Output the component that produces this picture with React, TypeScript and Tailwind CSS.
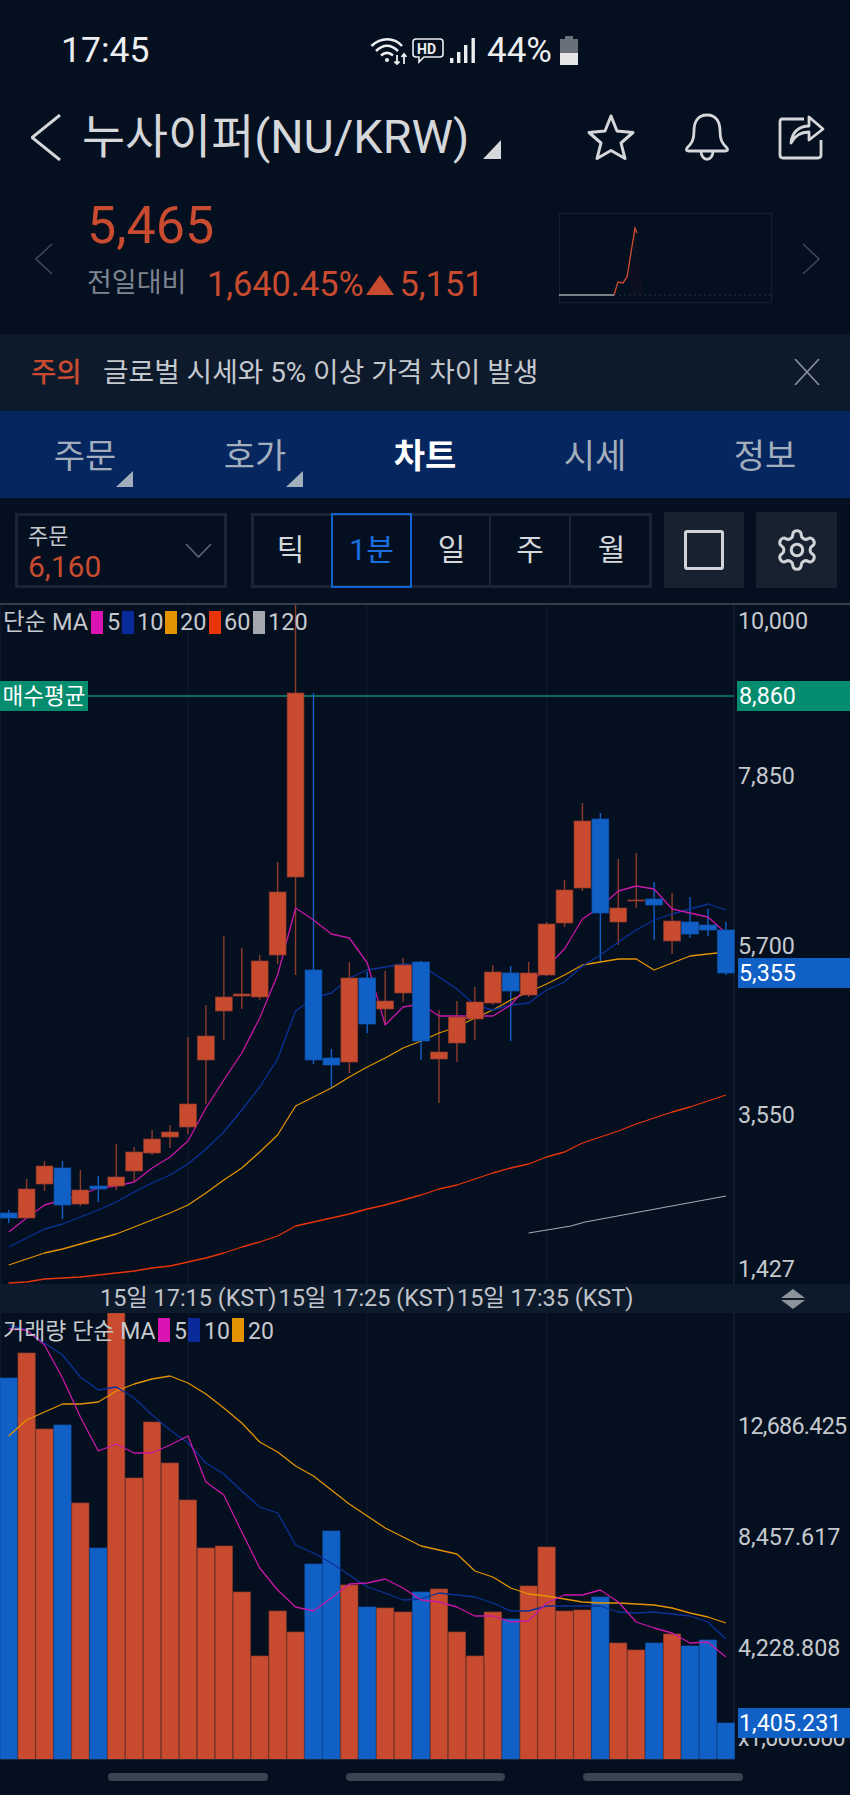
import React from "react";

const RED = "#c84b2f";
const RED_DARK = "#8f3c2b";
const BLUE = "#1160c6";
const X = (i: number) => 8.67 + 17.93 * i;

// [bodyTop, bodyBottom, wickTop, wickBottom, isBlue]
const candles: [number, number, number, number, number][] = [
  [1213, 1218, 1210, 1223, 1], [1189, 1218, 1179, 1218, 0], [1166, 1184, 1161, 1191, 0], [1168, 1205, 1161, 1219, 1],
  [1190, 1204, 1170, 1206, 0], [1186, 1189, 1176, 1202, 1], [1177, 1186, 1144, 1190, 0], [1152, 1171, 1147, 1181, 0],
  [1139, 1153, 1130, 1155, 0], [1132, 1137, 1125, 1148, 0], [1104, 1127, 1037, 1134, 0], [1036, 1060, 1005, 1104, 0],
  [997, 1011, 936, 1040, 0], [994, 996, 948, 1009, 0], [961, 997, 955, 1000, 0], [892, 955, 862, 964, 0],
  [693, 877, 604, 975, 0], [970, 1060, 693, 1064, 1], [1058, 1065, 1049, 1088, 1], [978, 1062, 962, 1073, 0],
  [978, 1024, 972, 1033, 1], [1001, 1009, 971, 1025, 0], [965, 993, 958, 1002, 0], [962, 1041, 961, 1060, 1],
  [1052, 1059, 1010, 1103, 0], [1017, 1043, 1001, 1062, 0], [1002, 1019, 987, 1040, 0], [972, 1003, 965, 1005, 0],
  [973, 991, 966, 1041, 1], [973, 995, 962, 997, 0], [924, 975, 922, 976, 0], [890, 923, 880, 927, 0],
  [821, 888, 803, 891, 0], [819, 913, 813, 962, 1], [908, 922, 859, 945, 0], [900, 901, 853, 908, 0],
  [899, 905, 882, 940, 1], [921, 941, 893, 954, 0], [922, 934, 897, 938, 1], [925, 930, 909, 936, 1],
  [930, 973, 922, 975, 1],
];

const ma5 = [1232,1218,1205,1200,1195,1188,1186,1182,1168,1157,1141,1108,1080,1053,1018,975,908,920,934,938,963,1025,1007,1004,1016,1016,1016,1016,1005,985,967,949,919,907,891,886,889,909,913,917,933];
const ma10 = [1247,1238,1229,1224,1217,1210,1202,1192,1183,1175,1164,1149,1132,1110,1087,1059,1011,998,993,978,970,967,964,965,977,989,1005,1010,1005,1003,990,982,966,955,942,930,920,914,909,904,910];
const ma20 = [1265,1259,1253,1249,1244,1239,1234,1227,1220,1213,1205,1193,1180,1168,1152,1135,1106,1097,1088,1077,1067,1058,1048,1041,1033,1027,1018,1010,1000,992,984,975,965,962,959,959,970,963,956,954,952];
const ma60 = [1283,1282,1279,1278,1277,1275,1273,1271,1268,1266,1262,1258,1253,1247,1242,1236,1226,1222,1218,1214,1209,1205,1200,1195,1189,1185,1179,1173,1168,1164,1157,1152,1143,1137,1131,1124,1118,1112,1107,1101,1095];

const volTop = [1378,1353,1429,1425,1503,1548,1313,1478,1422,1463,1500,1548,1546,1592,1656,1611,1632,1564,1531,1585,1607,1608,1612,1592,1589,1632,1656,1612,1619,1586,1547,1611,1610,1597,1643,1650,1643,1634,1646,1640,1723];
const volBlue = [0,3,5,17,18,20,23,28,33,36,38,39,40];

const vma5 = [1329,1330,1345,1378,1417,1451,1444,1453,1453,1445,1436,1482,1495,1532,1568,1590,1607,1611,1598,1584,1583,1579,1588,1600,1602,1607,1616,1616,1622,1621,1603,1595,1595,1590,1602,1622,1628,1633,1643,1642,1657];
const vma10 = [1325,1330,1343,1355,1377,1390,1387,1398,1415,1430,1443,1463,1474,1491,1507,1513,1545,1553,1563,1575,1587,1593,1600,1599,1593,1595,1597,1603,1611,1611,1606,1606,1606,1606,1612,1613,1612,1614,1616,1622,1639];
const vma20 = [1436,1420,1412,1404,1404,1402,1391,1384,1379,1376,1383,1394,1408,1423,1442,1452,1466,1476,1490,1504,1516,1528,1537,1546,1550,1554,1571,1577,1588,1594,1596,1599,1602,1603,1603,1604,1605,1608,1613,1617,1623];

const pts = (a: number[]) => a.map((y, i) => `${X(i).toFixed(1)},${y}`).join(" ");

function Line({ data, color }: { data: number[]; color: string }) {
  return <polyline points={pts(data)} fill="none" stroke={color} strokeWidth={1.3} strokeLinejoin="round" />;
}

function Grid({ top, bottom }: { top: number; bottom: number }) {
  return (
    <>
      {[0.7, 188, 367, 546.7].map((x) => (
        <line key={x} x1={x} x2={x} y1={top} y2={bottom} stroke="#101c2c" strokeWidth={1} />
      ))}
      <line x1={734} x2={734} y1={top} y2={bottom} stroke="#1b2636" strokeWidth={1.2} />
    </>
  );
}

function PriceChart() {
  return (
    <svg className="block w-[850px] h-[679px]" viewBox="0 605 850 679">
      <Grid top={605} bottom={1284} />
      <line x1={88} x2={734} y1={696} y2={696} stroke="#0b6a5c" strokeWidth={1.8} />
      {candles.map((c, i) => (
        <line key={i} x1={X(i)} x2={X(i)} y1={c[2]} y2={c[3]} stroke={c[4] ? BLUE : RED_DARK} strokeWidth={1.4} />
      ))}
      <Line data={ma60} color="#e8350a" />
      <polyline points="528.5,1233 571,1226 585,1222 726,1196" fill="none" stroke="#a3a8ae" strokeWidth={1.2} />
      <Line data={ma20} color="#e39302" />
      <Line data={ma10} color="#0a3298" />
      <Line data={ma5} color="#c718a8" />
      {candles.map((c, i) => (
        <rect
          key={i}
          x={X(i) - 8.4}
          y={c[0]}
          width={16.8}
          height={c[1] - c[0]}
          fill={c[4] ? BLUE : RED}
          stroke={c[4] ? "#0f55ad" : RED_DARK}
          strokeWidth={0.7}
        />
      ))}
    </svg>
  );
}

function VolumeChart() {
  return (
    <svg className="block w-[850px] h-[447px]" viewBox="0 1313 850 447">
      <Grid top={1313} bottom={1760} />
      {volTop.map((t, i) => {
        const blue = volBlue.includes(i);
        return (
          <rect
            key={i}
            x={X(i) - 8.6}
            y={t}
            width={17.2}
            height={1759.3 - t}
            fill={blue ? BLUE : RED}
            stroke={blue ? "#0f55ad" : RED_DARK}
            strokeWidth={0.7}
          />
        );
      })}
      <Line data={vma20} color="#e39302" />
      <Line data={vma10} color="#0a3298" />
      <Line data={vma5} color="#c718a8" />
      <line x1={0} x2={735} y1={1759.6} y2={1759.6} stroke="#1b2636" strokeWidth={1} />
    </svg>
  );
}

function Chevron({ dir, color, w, h, sw }: { dir: "l" | "r" | "d"; color: string; w: number; h: number; sw: number }) {
  const p =
    dir === "l"
      ? `M${w - 1} 1 L1 ${h / 2} L${w - 1} ${h - 1}`
      : dir === "r"
        ? `M1 1 L${w - 1} ${h / 2} L1 ${h - 1}`
        : `M1 1 L${w / 2} ${h - 1} L${w - 1} 1`;
  return (
    <svg width={w} height={h} className="block shrink-0">
      <path d={p} fill="none" stroke={color} strokeWidth={sw} />
    </svg>
  );
}

function Corner({ w, h, color }: { w: number; h: number; color: string }) {
  return (
    <svg width={w} height={h} className="block shrink-0">
      <polygon points={`${w},0 ${w},${h} 0,${h}`} fill={color} />
    </svg>
  );
}

function StatusBar() {
  return (
    <div className="flex h-[100px] items-center pl-[61px] pt-[2px] text-[#eceef0]">
      <div className="w-[309px] text-[35.5px] leading-none">17:45</div>
      <svg width="37" height="28" viewBox="0 0 37 28" className="block" fill="none" stroke="#eceef0">
        <path d="M1.5 9C11 0 24 0 32 9" strokeWidth="2.6" />
        <path d="M6 14C13 7 21 7 28 14" strokeWidth="2.6" />
        <path d="M11 18.5C15 15 19 15 23 18.5" strokeWidth="2.6" />
        <circle cx="17" cy="23" r="2" fill="#eceef0" stroke="none" />
        <path d="M27 18V27M24.5 24.5L27 27L29.5 24.5" strokeWidth="1.8" />
        <path d="M34 27V17M31.5 20L34 17L36.5 20" strokeWidth="1.8" />
      </svg>
      <svg width="32" height="26" viewBox="0 0 32 26" className="ml-[5px] block" fill="none">
        <path d="M4 1H28Q31 1 31 4V16Q31 19 28 19H12L7 24V19H4Q1 19 1 16V4Q1 1 4 1Z" stroke="#eceef0" strokeWidth="1.6" />
        <text x="5" y="15.5" fontSize="14" fontWeight="700" fill="#eceef0" fontFamily="Roboto, sans-serif">HD</text>
      </svg>
      <svg width="26" height="26" viewBox="0 0 26 26" className="ml-[6px] block" fill="#eceef0">
        <rect x="0" y="20" width="3.4" height="5" />
        <rect x="7" y="14" width="3.4" height="11" />
        <rect x="14" y="7" width="3.4" height="18" />
        <rect x="21.5" y="0" width="3.4" height="25" />
      </svg>
      <div className="ml-[11px] text-[35px] leading-none">44%</div>
      <svg width="20" height="29" viewBox="0 0 20 29" className="ml-[7px] block">
        <rect x="6" y="0" width="8" height="3" fill="#6a7079" />
        <rect x="1" y="3" width="18" height="14" fill="#6a7079" />
        <rect x="1" y="17" width="18" height="12" fill="#e3e5e7" />
      </svg>
    </div>
  );
}

function Header() {
  const c = "#d5d7da";
  return (
    <div className="flex h-[85px] items-center pb-[10px] pl-[31px] pr-[25px]">
      <Chevron dir="l" color={c} w={30} h={47} sw={3} />
      <div className="ml-[21px] text-[46.8px] leading-none text-[#d5d7da]">누사이퍼(NU/KRW)</div>
      <div className="ml-[14px] mt-[24px]">
        <Corner w={18} h={19} color={c} />
      </div>
      <div className="ml-auto flex items-center gap-[48px]">
        <svg width="50" height="48" viewBox="0 0 50 48" className="block">
          <polygon points="25,3 31,18 47,19.5 35,30 39,45.5 25,37.5 11,45.5 15,30 3,19.5 19,18" fill="none" stroke={c} strokeWidth="3" strokeLinejoin="round" />
        </svg>
        <svg width="46" height="48" viewBox="0 0 46 48" className="block" fill="none" stroke={c} strokeWidth="2.8">
          <path d="M23 2C13 2 10 10 10 18C10 27 8 30 3 35Q1 38 5 38H41Q45 38 43 35C38 30 36 27 36 18C36 10 33 2 23 2Z" />
          <path d="M17 38C17 49 29 49 29 38" />
        </svg>
        <svg width="47" height="46" viewBox="0 0 47 46" className="block" fill="none" stroke={c} strokeWidth="2.8">
          <path d="M26 5H4Q2 5 2 8V41Q2 44 5 44H40Q43 44 43 41V26" />
          <path d="M13 29C14 18 21 12 31 12V3L45 15L31 26V18C24 18 17 21 13 29Z" strokeLinejoin="round" />
        </svg>
      </div>
    </div>
  );
}

function PriceRow() {
  return (
    <div className="flex h-[149px] pl-[35px] pr-[30px]">
      <div className="mt-[58px]">
        <Chevron dir="l" color="#3c4654" w={18} h={32} sw={1.6} />
      </div>
      <div className="ml-[34px] flex w-[473px] flex-col pt-[11px]">
        <div className="h-[60px] text-[52px] leading-[60px] text-[#c84b2f]">5,465</div>
        <div className="mt-[8px] flex h-[40px] items-center">
          <span className="w-[120px] text-[27px] leading-none text-[#7d8590]">전일대비</span>
          <span className="text-[34.3px] leading-none text-[#c84b2f]">1,640.45%</span>
          <svg width="28" height="20" className="ml-[2px] mt-[2px] block">
            <polygon points="14,0 28,20 0,20" fill="#c84b2f" />
          </svg>
          <span className="ml-[6px] text-[34.3px] leading-none text-[#c84b2f]">5,151</span>
        </div>
      </div>
      <svg className="mt-[28px] block h-[90px] w-[213px] shrink-0" viewBox="0 0 213 90">
        <rect x="0.5" y="0.5" width="212" height="89" fill="none" stroke="#162130" />
        <line x1="55" x2="212" y1="82" y2="82" stroke="#26303e" strokeDasharray="2 3" />
        <polygon points="76,15 78,20 84,82 70,82" fill="#3a1a1c" opacity="0.15" />
        <line x1="0" x2="55" y1="82" y2="82" stroke="#a3a8ae" strokeWidth="1.6" />
        <polyline points="55,82 59,69 64,70 68,64 76,15 78,20" fill="none" stroke="#c84b2f" strokeWidth="1.4" />
      </svg>
      <div className="ml-[30px] mt-[58px]">
        <Chevron dir="r" color="#3c4654" w={18} h={32} sw={1.6} />
      </div>
    </div>
  );
}

function Notice() {
  return (
    <div className="flex h-[78px] items-center bg-[#0d1a2b] pl-[31px] pr-[30px]">
      <span className="w-[72px] text-[27.5px] font-medium leading-none text-[#c84b2f]">주의</span>
      <span className="text-[27.8px] leading-none text-[#c5c9ce]">글로벌 시세와 5% 이상 가격 차이 발생</span>
      <svg width="26" height="26" viewBox="0 0 26 26" className="ml-auto block">
        <path d="M1 0L25 26M25 0L1 26" stroke="#8a929c" strokeWidth="1.6" fill="none" />
      </svg>
    </div>
  );
}

function Tabs() {
  const tabs = [
    { t: "주문", corner: true },
    { t: "호가", corner: true },
    { t: "차트", active: true },
    { t: "시세" },
    { t: "정보" },
  ];
  return (
    <div className="grid h-[87px] grid-cols-5 bg-[#06265f]">
      {tabs.map((x) => (
        <div key={x.t} className="relative flex items-center justify-center pt-[3px]">
          <span className={x.active ? "text-[34px] font-bold leading-none text-white" : "text-[34px] leading-none text-[#a3aebd]"}>
            {x.t}
          </span>
          {x.corner && (
            <div className="absolute bottom-[11px] right-[37px]">
              <Corner w={17} h={16} color="#a3aebd" />
            </div>
          )}
        </div>
      ))}
    </div>
  );
}

function Toolbar() {
  const base = "flex items-center justify-center text-[30px] leading-none text-[#d5d7da]";
  return (
    <div className="flex h-[105px] items-center pb-[1px] pl-[15px]">
      <div className="relative flex h-[75px] w-[212px] flex-col border-[3px] border-[#1a2636] pl-[10px] pt-[8px]">
        <span className="text-[22px] leading-[25px] text-[#c5c9ce]">주문</span>
        <span className="mt-[3px] text-[30px] leading-[30px] text-[#c84b2f]">6,160</span>
        <div className="absolute right-[12px] top-[27px]">
          <Chevron dir="d" color="#5f6874" w={27} h={15} sw={1.6} />
        </div>
      </div>
      <div className="ml-[24px] flex h-[75px] w-[401px] border-[3px] border-[#1a2636]">
        <div className={`${base} w-[77px] pr-[4px]`}>틱</div>
        <div className="-my-[3px] flex w-[81px] items-center justify-center border-[2px] border-[#0f62d0] text-[30px] leading-none text-[#1a6fe0]">
          1분
        </div>
        <div className={`${base} w-[79px] border-r-[2px] border-[#1a2636] pl-[2px]`}>일</div>
        <div className={`${base} w-[80px] border-r-[2px] border-[#1a2636]`}>주</div>
        <div className={`${base} w-[78px] pl-[3px]`}>월</div>
      </div>
      <div className="ml-[12px] flex h-[76px] w-[80px] items-center justify-center bg-[#17212f]">
        <div className="h-[40px] w-[40px] rounded-[3px] border-[3px] border-[#d0d3d7]" />
      </div>
      <div className="ml-[12px] flex h-[76px] w-[81px] items-center justify-center bg-[#17212f]">
        <svg width="46" height="46" viewBox="0 0 24 24" fill="none" stroke="#d0d3d7" strokeWidth="1.6" strokeLinecap="round" strokeLinejoin="round" className="block">
          <path d="M12.22 2h-.44a2 2 0 0 0-2 2v.18a2 2 0 0 1-1 1.73l-.43.25a2 2 0 0 1-2 0l-.15-.08a2 2 0 0 0-2.73.73l-.22.38a2 2 0 0 0 .73 2.73l.15.1a2 2 0 0 1 1 1.72v.51a2 2 0 0 1-1 1.74l-.15.09a2 2 0 0 0-.73 2.73l.22.38a2 2 0 0 0 2.73.73l.15-.08a2 2 0 0 1 2 0l.43.25a2 2 0 0 1 1 1.73V20a2 2 0 0 0 2 2h.44a2 2 0 0 0 2-2v-.18a2 2 0 0 1 1-1.73l.43-.25a2 2 0 0 1 2 0l.15.08a2 2 0 0 0 2.73-.73l.22-.39a2 2 0 0 0-.73-2.73l-.15-.08a2 2 0 0 1-1-1.74v-.5a2 2 0 0 1 1-1.74l.15-.09a2 2 0 0 0 .73-2.73l-.22-.38a2 2 0 0 0-2.73-.73l-.15.08a2 2 0 0 1-2 0l-.43-.25a2 2 0 0 1-1-1.73V4a2 2 0 0 0-2-2z" />
          <circle cx="12" cy="12" r="3" />
        </svg>
      </div>
    </div>
  );
}

const swatch = "h-[23px] w-[12px] shrink-0";

function PriceSection() {
  const label = "absolute left-[738px] -translate-y-1/2 text-[23.3px] leading-none text-[#c5c9ce]";
  return (
    <div className="relative h-[679px]">
      <PriceChart />
      <div className="absolute left-[3px] top-[6px] flex h-[23px] items-center text-[23.5px] leading-none text-[#c5c9ce]">
        <span className="w-[88px]">단순 MA</span>
        <span className={`${swatch} bg-[#dc13b3]`} />
        <span className="w-[19px] pl-[4px]">5</span>
        <span className={`${swatch} bg-[#0a2a9c]`} />
        <span className="w-[31px] pl-[3px]">10</span>
        <span className={`${swatch} bg-[#e39302]`} />
        <span className="w-[32px] pl-[3px]">20</span>
        <span className={`${swatch} bg-[#e8350a]`} />
        <span className="w-[32px] pl-[3px]">60</span>
        <span className={`${swatch} bg-[#a3a8ae]`} />
        <span className="pl-[3px]">120</span>
      </div>
      <div className="absolute left-0 top-[76px] flex h-[30px] w-[88px] items-center justify-center bg-[#048c6e] pt-[1px] text-[22.5px] leading-none text-white">
        매수평균
      </div>
      <div className={`${label} top-[17px]`}>10,000</div>
      <div className="absolute left-[737px] top-[76px] flex h-[30px] w-[113px] items-center bg-[#048c6e] pl-[2px] pt-[1px] text-[23.3px] leading-none text-white">
        8,860
      </div>
      <div className={`${label} top-[172px]`}>7,850</div>
      <div className={`${label} top-[342px]`}>5,700</div>
      <div className="absolute left-[738px] top-[353px] flex h-[30px] w-[112px] items-center bg-[#1160c6] pl-[1px] pt-[2px] text-[23.3px] leading-none text-white">
        5,355
      </div>
      <div className={`${label} top-[511px]`}>3,550</div>
      <div className={`${label} top-[665px]`}>1,427</div>
    </div>
  );
}

function TimeAxis() {
  return (
    <div className="flex h-[29px] items-center bg-[#0d1a2b] pl-[100px] text-[23.4px] leading-none text-[#c0c4ca]">
      <span className="w-[178.5px]">15일 17:15 (KST)</span>
      <span className="w-[178.5px]">15일 17:25 (KST)</span>
      <span>15일 17:35 (KST)</span>
      <svg width="24" height="20" className="absolute left-[781px] block">
        <polygon points="12,0 24,9 0,9" fill="#8d939b" />
        <polygon points="0,11 24,11 12,20" fill="#8d939b" />
      </svg>
    </div>
  );
}

function VolumeSection() {
  const label = "absolute left-[738px] -translate-y-1/2 text-[23.3px] leading-none text-[#c5c9ce]";
  return (
    <div className="relative h-[447px]">
      <VolumeChart />
      <div className="absolute left-[3px] top-[6px] flex h-[24px] items-center text-[23px] leading-none text-[#c5c9ce]">
        <span className="w-[155px]">거래량 단순 MA</span>
        <span className="-mt-[2px] h-[24px] w-[12px] shrink-0 bg-[#dc13b3]" />
        <span className="w-[18px] pl-[4px]">5</span>
        <span className="-mt-[2px] h-[24px] w-[12px] shrink-0 bg-[#0a2a9c]" />
        <span className="w-[32px] pl-[4px]">10</span>
        <span className="-mt-[2px] h-[24px] w-[12px] shrink-0 bg-[#e39302]" />
        <span className="pl-[4px]">20</span>
      </div>
      <div className={`${label} top-[114px] tracking-[-0.7px]`}>12,686.425</div>
      <div className={`${label} top-[225px]`}>8,457.617</div>
      <div className={`${label} top-[336px]`}>4,228.808</div>
      <div className={`${label} top-[426px] tracking-[-0.7px]`}>x1,000.000</div>
      <div className="absolute left-[738px] top-[395px] flex h-[30px] w-[112px] items-center bg-[#1160c6] pl-[1px] pt-[2px] text-[23.3px] leading-none text-white">
        1,405.231
      </div>
    </div>
  );
}

function NavBar() {
  return (
    <div className="flex h-[35px] pt-[13px] pl-[108px]">
      <div className="h-[8px] w-[160px] rounded-full bg-[#3a4350]" />
      <div className="ml-[78px] h-[8px] w-[159px] rounded-full bg-[#3a4350]" />
      <div className="ml-[78px] h-[8px] w-[160px] rounded-full bg-[#3a4350]" />
    </div>
  );
}

export default function App() {
  return (
    <div className="relative flex h-[1795px] w-[850px] flex-col overflow-hidden bg-[#040f20] [font-family:Roboto,'Noto_Sans_CJK_KR',sans-serif]">
      <StatusBar />
      <Header />
      <PriceRow />
      <Notice />
      <Tabs />
      <Toolbar />
      <div className="h-[2px] bg-[#343e4b]" />
      <PriceSection />
      <TimeAxis />
      <VolumeSection />
      <NavBar />
    </div>
  );
}
